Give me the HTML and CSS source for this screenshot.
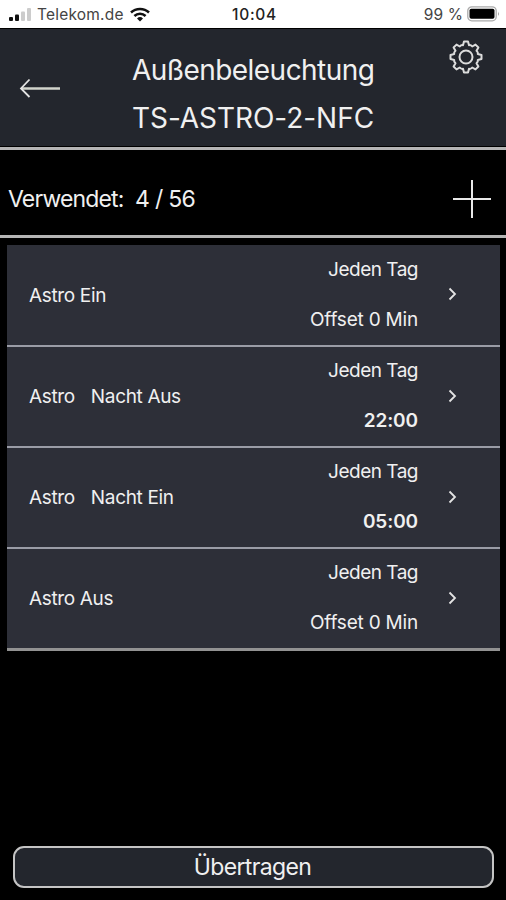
FILE: index.html
```html
<!DOCTYPE html>
<html lang="de">
<head>
  <meta charset="UTF-8">
  <title>Außenbeleuchtung</title>
  <link rel="stylesheet" href="styles.css">
</head>
<body>

  <div class="status">
    <div class="carrier">
      <svg class="signal" width="24" height="14" viewBox="0 0 24 14">
        <rect x="0" y="9" width="4" height="4" rx="1" fill="#111"/>
        <rect x="6" y="6.500" width="4" height="6.500" rx="1" fill="#111"/>
        <rect x="12" y="3.500" width="4" height="9.500" rx="1" fill="#ccc"/>
        <rect x="18" y="0" width="4" height="13" rx="1" fill="#ccc"/>
      </svg>
      <span class="provider">Telekom.de</span>
      <svg class="wifi" width="20" height="15" viewBox="0 0 20 15" fill="none" stroke="#111" stroke-width="2.500">
        <path d="M1 5.500a13 13 0 0 1 18 0"/>
        <path d="M4.400 9a8 8 0 0 1 11.200 0"/>
        <path d="M7 11.500a4.300 4.300 0 0 1 6 0L10 14.500z" fill="#111" stroke="none"/>
      </svg>
    </div>
    <span class="clock">10:04</span>
    <div class="power">
      <span class="percent">99 %</span>
      <svg width="33" height="16" viewBox="0 0 33 16">
        <rect x="0.800" y="0.800" width="28.400" height="14" rx="4" fill="#fff" stroke="#aaa" stroke-width="1.300"/>
        <rect x="2.500" y="2.800" width="25" height="10" rx="1.800" fill="#000"/>
        <path d="M31 5.500q1.800 2.300 0 4.600z" fill="#999"/>
      </svg>
    </div>
  </div>

  <header class="header">
    <svg class="back" width="42" height="20" viewBox="0 0 42 20" fill="none">
      <path d="M2 10.500H41" stroke="#d2d4cc" stroke-width="2.600"/>
      <path d="M10.500 1.500L2 10.500L10.500 19" stroke="#e4e4e4" stroke-width="1.800"/>
    </svg>
    <h1 class="title"><span class="name">Außenbeleuchtung</span><span class="model">TS-ASTRO-2-NFC</span></h1>
    <svg class="gear" width="36" height="36" viewBox="-18 -18 36 36" fill="none" stroke="#dcdcdc" stroke-width="2" stroke-linejoin="round">
      <path d="M-2-15.500H2L3-11.800Q4.800-12.300 6.200-10.500L9.500-12.400L12.400-9.500L10.500-6.200Q12.300-4.800 11.800-3L15.500-2V2L11.800 3Q12.300 4.800 10.500 6.200L12.400 9.500L9.500 12.400L6.200 10.500Q4.800 12.300 3 11.800L2 15.500H-2L-3 11.800Q-4.800 12.300-6.200 10.500L-9.500 12.400L-12.400 9.500L-10.500 6.200Q-12.300 4.800-11.800 3L-15.500 2V-2L-11.800-3Q-12.300-4.800-10.500-6.200L-12.400-9.500L-9.500-12.400L-6.200-10.500Q-4.800-12.300-3-11.800Z"/>
      <circle r="6.500"/>
    </svg>
  </header>

  <div class="usage">
    <span class="used">Verwendet:</span>
    <span class="count">4 / 56</span>
    <svg class="add" width="38" height="38" viewBox="0 0 38 38" stroke="#e8e8e8" stroke-width="2">
      <path d="M0 19H38M19 0V38"/>
    </svg>
  </div>

  <div class="list">
    <div class="row">
      <div class="label"><span>Astro Ein</span></div>
      <div class="when"><span class="day">Jeden Tag</span><span class="offset">Offset 0 Min</span></div>
      <svg class="chevron" width="9" height="14" viewBox="0 0 9 14"><path d="M1.500 1.500L7 7L1.500 12.500"/></svg>
    </div>
    <div class="row">
      <div class="label"><span>Astro</span><span>Nacht Aus</span></div>
      <div class="when"><span class="day">Jeden Tag</span><span class="time">22:00</span></div>
      <svg class="chevron" width="9" height="14" viewBox="0 0 9 14"><path d="M1.500 1.500L7 7L1.500 12.500"/></svg>
    </div>
    <div class="row">
      <div class="label"><span>Astro</span><span>Nacht Ein</span></div>
      <div class="when"><span class="day">Jeden Tag</span><span class="time">05:00</span></div>
      <svg class="chevron" width="9" height="14" viewBox="0 0 9 14"><path d="M1.500 1.500L7 7L1.500 12.500"/></svg>
    </div>
    <div class="row">
      <div class="label"><span>Astro Aus</span></div>
      <div class="when"><span class="day">Jeden Tag</span><span class="offset">Offset 0 Min</span></div>
      <svg class="chevron" width="9" height="14" viewBox="0 0 9 14"><path d="M1.500 1.500L7 7L1.500 12.500"/></svg>
    </div>
  </div>

  <button class="btn">Übertragen</button>

</body>
</html>
```

FILE: styles.css
```css
:root {
  --panel: #23262d;
  --row: #2d2f38;
  --line: #b5b5b5;
  --text: #f0f0f0;
}
* {
  box-sizing: border-box;
}
body {
  margin: 0;
  height: 900px;
  display: flex;
  flex-direction: column;
  font-family: Inter, "Liberation Sans", sans-serif;
  background: #000;
  color: var(--text);
  overflow: hidden;
}
svg {
  display: block;
  flex: none;
}
.status {
  height: 28px;
  padding: 1px 6px 0 9px;
  display: grid;
  grid-template-columns: 1fr auto 1fr;
  align-items: center;
  background: #fff;
  color: #444;
  line-height: 27px;
}
.carrier, .power {
  display: flex;
  align-items: center;
}
.provider {
  margin: 0 6px 0 4px;
  font-size: 15.5px;
  letter-spacing: 0.2px;
}
.wifi {
  margin-top: -1px;
}
.clock {
  color: #222;
  font-weight: 500;
  font-size: 15.5px;
  letter-spacing: 0.7px;
}
.power {
  justify-content: flex-end;
  gap: 4px;
}
.power svg {
  margin-top: -2px;
}
.percent {
  font-size: 15.5px;
  letter-spacing: 0.1px;
}
.header {
  height: 118px;
  padding-left: 19px;
  display: flex;
  background: var(--panel);
  border-top: 1px solid #000;
}
.back {
  margin-top: 49px;
}
.title {
  margin: 17px 0 0 71px;
  width: 316px;
  font-size: 28px;
  font-weight: 400;
  line-height: 48px;
}
.title span {
  display: block;
}
.name {
  letter-spacing: -0.55px;
}
.model {
  letter-spacing: -0.05px;
}
.gear {
  margin-top: 10px;
}
.usage {
  height: 91px;
  margin-top: 1px;
  padding: 13px 15px 0 8px;
  display: flex;
  align-items: center;
  border-top: 3px solid var(--line);
  border-bottom: 3px solid var(--line);
  font-size: 23px;
}
.used {
  width: 127px;
  letter-spacing: -0.85px;
}
.count {
  letter-spacing: -0.7px;
}
.add {
  margin-left: auto;
}
.list {
  margin: 7px 6px 0 7px;
  border-bottom: 3px solid #929292;
}
.row {
  height: 101px;
  padding: 0 43px 0 22px;
  display: flex;
  align-items: center;
  background: var(--row);
  border-bottom: 2px solid #9a9ca6;
  font-size: 19px;
}
.row:first-child {
  height: 102px;
}
.row:last-child {
  height: 99px;
  border-bottom: none;
}
.label {
  display: flex;
  gap: 16px;
  letter-spacing: -0.35px;
}
.when {
  margin: -1px 30px 0 auto;
  display: flex;
  flex-direction: column;
  text-align: right;
  line-height: 50px;
}
.day {
  letter-spacing: -0.5px;
}
.offset {
  letter-spacing: -0.2px;
}
.time {
  font-weight: 600;
  letter-spacing: -0.1px;
}
.chevron {
  margin-top: -2px;
  fill: none;
  stroke: #e4e4e4;
  stroke-width: 1.8;
}
.btn {
  height: 42px;
  margin: auto 12px 12px 13px;
  padding: 0 2px 0 0;
  background: var(--panel);
  color: var(--text);
  border: 2px solid #c4c4c4;
  border-radius: 11px;
  font-family: inherit;
  font-size: 23px;
  letter-spacing: -0.65px;
}
```
